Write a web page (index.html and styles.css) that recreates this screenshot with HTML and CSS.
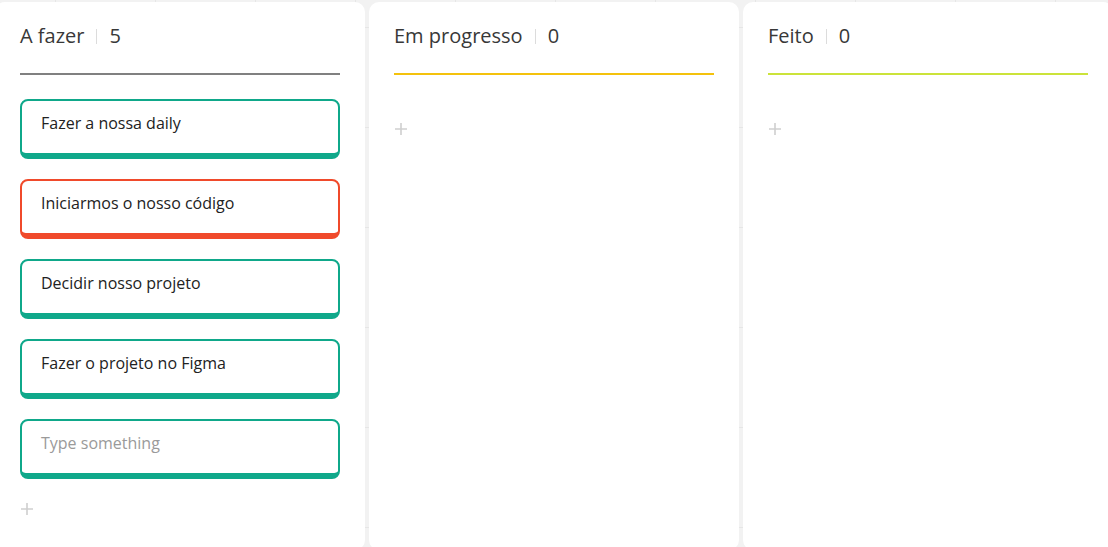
FILE: index.html
```html
<!DOCTYPE html>
<html lang="pt-BR">
<head>
<meta charset="utf-8">
<title>Kanban</title>
<link rel="stylesheet" href="styles.css">
</head>
<body>
<main class="board">
  <section class="column">
    <header class="col-head">
      <h2 class="col-title">A fazer</h2>
      <span class="sep"></span>
      <span class="count">5</span>
    </header>
    <div class="rule rule-gray"></div>
    <ul class="cards">
      <li class="card">Fazer a nossa daily</li>
      <li class="card card-red">Iniciarmos o nosso código</li>
      <li class="card">Decidir nosso projeto</li>
      <li class="card">Fazer o projeto no Figma</li>
      <li class="card"><span class="placeholder">Type something</span></li>
    </ul>
    <button class="add" aria-label="Adicionar">
      <svg width="12" height="12" viewBox="0 0 12 12"><path d="M6 0V12M0 6H12" stroke="#cfcfcf" stroke-width="1.6" fill="none"/></svg>
    </button>
  </section>
  <section class="column">
    <header class="col-head">
      <h2 class="col-title">Em progresso</h2>
      <span class="sep"></span>
      <span class="count">0</span>
    </header>
    <div class="rule rule-yellow"></div>
    <ul class="cards"></ul>
    <button class="add" aria-label="Adicionar">
      <svg width="12" height="12" viewBox="0 0 12 12"><path d="M6 0V12M0 6H12" stroke="#cfcfcf" stroke-width="1.6" fill="none"/></svg>
    </button>
  </section>
  <section class="column">
    <header class="col-head">
      <h2 class="col-title">Feito</h2>
      <span class="sep"></span>
      <span class="count">0</span>
    </header>
    <div class="rule rule-lime"></div>
    <ul class="cards"></ul>
    <button class="add" aria-label="Adicionar">
      <svg width="12" height="12" viewBox="0 0 12 12"><path d="M6 0V12M0 6H12" stroke="#cfcfcf" stroke-width="1.6" fill="none"/></svg>
    </button>
  </section>
</main>
</body>
</html>
```
FILE: styles.css
```css
html, body {
  margin: 0;
  height: 547px;
  overflow: hidden;
}
body {
  font-family: "Open Sans", "Noto Sans", sans-serif;
  background-color: #f2f2f2;
  background-image:
    linear-gradient(to right, #e6e6e6 1px, transparent 1px),
    linear-gradient(to bottom, #e6e6e6 1px, transparent 1px);
  background-size: 100px 100px;
  background-position: 55px 27px;
}
.board {
  display: flex;
  gap: 4px;
  margin-left: -5px;
  padding-top: 2px;
}
.column {
  flex: 0 0 370px;
  height: 548px;
  box-sizing: border-box;
  background: #fff;
  border-radius: 10px;
  padding: 20px 25px 0;
}
.col-head {
  display: flex;
  align-items: center;
  height: 28px;
}
.col-title {
  margin: 0;
  font-size: 20px;
  font-weight: 400;
  line-height: 28px;
  color: #383838;
}
.sep {
  width: 1px;
  height: 15px;
  background: #dcdcdc;
  margin: 0 12px 0 12px;
}
.count {
  font-size: 20px;
  line-height: 28px;
  color: #383838;
}
.rule {
  height: 2px;
  margin-top: 23px;
}
.rule-gray { background: #808080; }
.rule-yellow { background: #f4c20d; }
.rule-lime { background: #cbe33a; }
.cards {
  list-style: none;
  margin: 24px 0 0;
  padding: 0;
  min-height: 20px;
}
.card {
  box-sizing: border-box;
  height: 60px;
  margin-bottom: 20px;
  border: 2px solid #0fa88a;
  border-bottom-width: 6px;
  border-radius: 8px;
  padding: 11px 19px 0;
  font-size: 16px;
  line-height: 22px;
  color: #222;
}
.card-red {
  border-color: #f04a2b;
}
.placeholder {
  color: #9a9a9a;
}
.add {
  display: flex;
  align-items: center;
  height: 20px;
  padding: 0 0 0 1px;
  border: 0;
  background: none;
}
```
